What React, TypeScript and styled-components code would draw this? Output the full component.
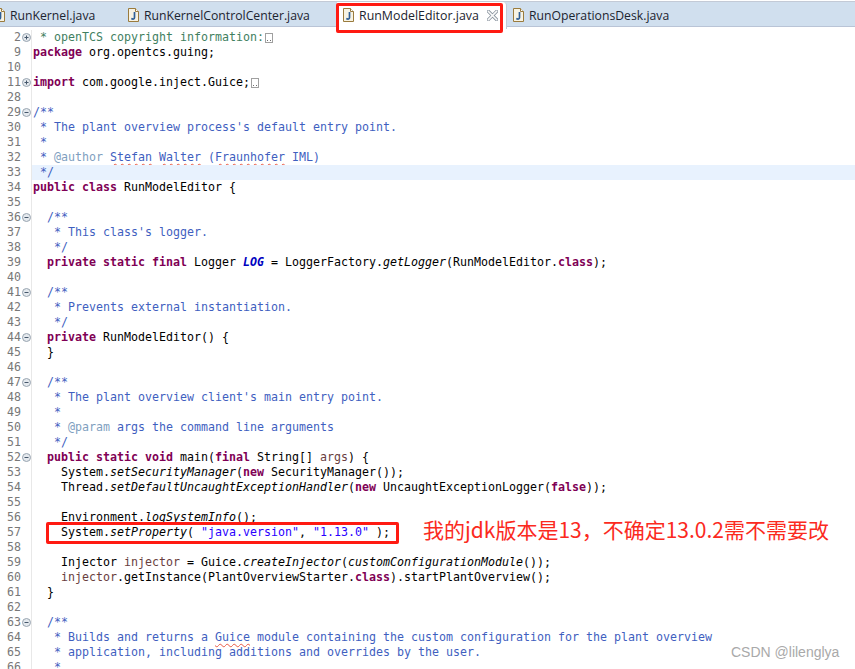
import React from "react";
import styled, { createGlobalStyle } from "styled-components";

const Global = createGlobalStyle`
  html, body { margin: 0; padding: 0; background: #fff; }
  #root { width: 855px; height: 669px; overflow: hidden; }
`;

const Page = styled.div`
  position: relative;
  width: 855px;
  height: 669px;
  overflow: hidden;
  background: #fff;
`;

const TabBar = styled.div`
  display: flex;
  align-items: flex-start;
  height: 24px;
  margin-top: 1px;
  border-top: 1px solid #c3cad6;
  border-bottom: 1px solid #b9c4d6;
  background: #d0dfee;
`;

const Tab = styled.div<{ $active?: boolean; $w: number; $first?: boolean }>`
  display: flex;
  align-items: center;
  gap: 5px;
  box-sizing: border-box;
  width: ${(p) => p.$w}px;
  flex: none;
  padding: 0 0 1px 6px;
  margin-left: ${(p) => (p.$first ? -12 : 0)}px;
  height: 27px;
  background: ${(p) => (p.$active ? "#fff" : "transparent")};
  border-right: ${(p) => (p.$active ? "1px solid #c3cad6" : "none")};
  border-top-right-radius: ${(p) => (p.$active ? 4 : 0)}px;
  font: ${(p) => (p.$active ? 12.38 : 12.22)}px "Open Sans", "Noto Sans", sans-serif;
  color: #1c2430;
  white-space: nowrap;
`;

const CloseMark = styled.svg`
  margin-left: 3px;
  flex: none;
`;

const Editor = styled.div`
  display: flex;
  flex-direction: column;
  margin-top: 3px;
  font: 11.63px/15px "DejaVu Sans Mono", monospace;
`;

const Row = styled.div`
  display: flex;
  height: 15px;
`;

const Gutter = styled.div`
  display: flex;
  align-items: center;
  flex: none;
  width: 32px;
  height: 15px;
  box-sizing: border-box;
  border-right: 1px solid #e8e8e8;
`;

const LineNo = styled.span`
  box-sizing: border-box;
  width: 21px;
  text-align: right;
  color: #787878;
  flex: none;
`;

const FoldBox = styled.svg`
  margin-left: 0.5px;
  flex: none;
`;

const Code = styled.div<{ $current?: boolean }>`
  flex: 1;
  padding-left: 1px;
  white-space: pre;
  color: #000;
  background: ${(p) => (p.$current ? "#e8f2fe" : "transparent")};
`;

const Tok = styled.span<{ $k: string }>`
  color: ${(p) =>
    ({
      kw: "#7f0055",
      str: "#2a00ff",
      doc: "#3f5fbf",
      tag: "#7f9fbf",
      cm: "#3f7f5f",
      fld: "#0000c0",
      loc: "#6a3e3e",
      it: "#000",
      sq: "#3f5fbf",
      tx: "#000",
    } as Record<string, string>)[p.$k]};
  font-weight: ${(p) => (p.$k === "kw" || p.$k === "fld" ? 600 : 400)};
  font-style: ${(p) => (p.$k === "it" || p.$k === "fld" ? "italic" : "normal")};
  text-decoration: ${(p) => (p.$k === "sq" ? "underline wavy #ea5a44 1px" : "none")};
  text-decoration-skip-ink: none;
  text-underline-offset: 2px;
`;

const CollapsedBox = styled.svg`
  display: inline-block;
  margin-left: 1px;
  vertical-align: -2px;
`;

const RedBox = styled.div<{ $x: number; $y: number; $w: number; $h: number }>`
  position: absolute;
  box-sizing: border-box;
  left: ${(p) => p.$x}px;
  top: ${(p) => p.$y}px;
  width: ${(p) => p.$w}px;
  height: ${(p) => p.$h}px;
  border: 3px solid #ff1a12;
  border-radius: 2px;
`;

const Note = styled.div`
  position: absolute;
  left: 423px;
  top: 516px;
  font: 21px/26px "Noto Sans CJK SC", "Noto Sans", sans-serif;
  color: #fb2a1e;
  white-space: nowrap;
`;

const Watermark = styled.div`
  position: absolute;
  left: 731px;
  top: 643px;
  font: 14px/18px "Liberation Sans", Arial, sans-serif;
  color: #a9a9a9;
  white-space: nowrap;
`;

const JavaIcon = () => (
  <svg width="11" height="14" viewBox="0 0 11 14" style={{ flex: "none" }}>
    <path d="M.5 .5H7.5L10.5 3.5V13.5H.5Z" fill="#f7f3e4" stroke="#9a7b3d" />
    <path d="M7.5 .5V3.5H10.5" fill="#fff" stroke="#9a7b3d" />
    <path d="M6.5 4V9.5C6.5 11.2 5 11.5 3.3 10.5" fill="none" stroke="#2f5f96" strokeWidth="1.7" />
  </svg>
);

const Fold = ({ open }: { open: boolean }) => (
  <FoldBox width="9" height="9" viewBox="0 0 9 9">
    <circle cx="4.5" cy="4.5" r="4" fill="#e4e9ee" stroke="#98a4b0" />
    <path d="M2.5 4.5H6.5" stroke="#45566a" />
    {open ? <path d="M4.5 2.5V6.5" stroke="#45566a" /> : null}
  </FoldBox>
);

const Collapsed = () => (
  <CollapsedBox width="8" height="10" viewBox="0 0 8 10">
    <rect x=".5" y=".5" width="7" height="9" fill="none" stroke="#a0a0a0" />
    <rect x="2" y="7" width="1" height="1" fill="#707070" />
    <rect x="5" y="7" width="1" height="1" fill="#707070" />
  </CollapsedBox>
);

type T = [string, string];
interface L { n: number; f?: "+" | "-"; t?: T[]; box?: boolean; cur?: boolean }

const lines: L[] = [
  { n: 2, f: "+", t: [["cm", " * openTCS copyright information:"]], box: true },
  { n: 9, t: [["kw", "package"], ["tx", " org.opentcs.guing;"]] },
  { n: 10 },
  { n: 11, f: "+", t: [["kw", "import"], ["tx", " com.google.inject.Guice;"]], box: true },
  { n: 28 },
  { n: 29, f: "-", t: [["doc", "/**"]] },
  { n: 30, t: [["doc", " * The plant overview process's default entry point."]] },
  { n: 31, t: [["doc", " *"]] },
  { n: 32, t: [["doc", " * "], ["tag", "@author"], ["doc", " "], ["sq", "Stefan"], ["doc", " "], ["sq", "Walter"], ["doc", " ("], ["sq", "Fraunhofer"], ["doc", " IML)"]] },
  { n: 33, t: [["doc", " */"]], cur: true },
  { n: 34, t: [["kw", "public"], ["tx", " "], ["kw", "class"], ["tx", " RunModelEditor {"]] },
  { n: 35 },
  { n: 36, f: "-", t: [["doc", "  /**"]] },
  { n: 37, t: [["doc", "   * This class's logger."]] },
  { n: 38, t: [["doc", "   */"]] },
  { n: 39, t: [["tx", "  "], ["kw", "private"], ["tx", " "], ["kw", "static"], ["tx", " "], ["kw", "final"], ["tx", " Logger "], ["fld", "LOG"], ["tx", " = LoggerFactory."], ["it", "getLogger"], ["tx", "(RunModelEditor."], ["kw", "class"], ["tx", ");"]] },
  { n: 40 },
  { n: 41, f: "-", t: [["doc", "  /**"]] },
  { n: 42, t: [["doc", "   * Prevents external instantiation."]] },
  { n: 43, t: [["doc", "   */"]] },
  { n: 44, f: "-", t: [["tx", "  "], ["kw", "private"], ["tx", " RunModelEditor() {"]] },
  { n: 45, t: [["tx", "  }"]] },
  { n: 46 },
  { n: 47, f: "-", t: [["doc", "  /**"]] },
  { n: 48, t: [["doc", "   * The plant overview client's main entry point."]] },
  { n: 49, t: [["doc", "   *"]] },
  { n: 50, t: [["doc", "   * "], ["tag", "@param"], ["doc", " args the command line arguments"]] },
  { n: 51, t: [["doc", "   */"]] },
  { n: 52, f: "-", t: [["tx", "  "], ["kw", "public"], ["tx", " "], ["kw", "static"], ["tx", " "], ["kw", "void"], ["tx", " main("], ["kw", "final"], ["tx", " String[] "], ["loc", "args"], ["tx", ") {"]] },
  { n: 53, t: [["tx", "    System."], ["it", "setSecurityManager"], ["tx", "("], ["kw", "new"], ["tx", " SecurityManager());"]] },
  { n: 54, t: [["tx", "    Thread."], ["it", "setDefaultUncaughtExceptionHandler"], ["tx", "("], ["kw", "new"], ["tx", " UncaughtExceptionLogger("], ["kw", "false"], ["tx", "));"]] },
  { n: 55 },
  { n: 56, t: [["tx", "    Environment."], ["it", "logSystemInfo"], ["tx", "();"]] },
  { n: 57, t: [["tx", "    System."], ["it", "setProperty"], ["tx", "( "], ["str", '"java.version"'], ["tx", ", "], ["str", '"1.13.0"'], ["tx", " );"]] },
  { n: 58 },
  { n: 59, t: [["tx", "    Injector "], ["loc", "injector"], ["tx", " = Guice."], ["it", "createInjector"], ["tx", "("], ["it", "customConfigurationModule"], ["tx", "());"]] },
  { n: 60, t: [["tx", "    "], ["loc", "injector"], ["tx", ".getInstance(PlantOverviewStarter."], ["kw", "class"], ["tx", ").startPlantOverview();"]] },
  { n: 61, t: [["tx", "  }"]] },
  { n: 62 },
  { n: 63, f: "-", t: [["doc", "  /**"]] },
  { n: 64, t: [["doc", "   * Builds and returns a "], ["sq", "Guice"], ["doc", " module containing the custom configuration for the plant overview"]] },
  { n: 65, t: [["doc", "   * application, including additions and overrides by the user."]] },
  { n: 66, t: [["doc", "   *"]] },
];

export default function App() {
  return (
    <Page>
      <Global />
      <TabBar>
        <Tab $first $w={134}><JavaIcon />RunKernel.java</Tab>
        <Tab $w={215}><JavaIcon />RunKernelControlCenter.java</Tab>
        <Tab $active $w={170}>
          <JavaIcon />RunModelEditor.java
          <CloseMark width="11" height="11" viewBox="0 0 11 11">
            <path d="M1.5 1.5L9.5 9.5M9.5 1.5L1.5 9.5" stroke="#8b95a0" strokeWidth="3.2" fill="none" strokeLinecap="square" />
            <path d="M1.5 1.5L9.5 9.5M9.5 1.5L1.5 9.5" stroke="#fafafa" strokeWidth="1.6" fill="none" strokeLinecap="square" />
          </CloseMark>
        </Tab>
        <Tab $w={180}><JavaIcon />RunOperationsDesk.java</Tab>
      </TabBar>
      <Editor>
        {lines.map((l) => (
          <Row key={l.n}>
            <Gutter>
              <LineNo>{l.n}</LineNo>
              {l.f ? <Fold open={l.f === "+"} /> : null}
            </Gutter>
            <Code $current={l.cur}>
              {(l.t ?? []).map(([k, s], i) => (
                <Tok key={i} $k={k}>{s}</Tok>
              ))}
              {l.box ? <Collapsed /> : null}
            </Code>
          </Row>
        ))}
      </Editor>
      <RedBox $x={336} $y={3} $w={167} $h={30} />
      <RedBox $x={46} $y={522} $w={353} $h={22} />
      <Note>我的jdk版本是13，不确定13.0.2需不需要改</Note>
      <Watermark>CSDN @lilenglya</Watermark>
    </Page>
  );
}
